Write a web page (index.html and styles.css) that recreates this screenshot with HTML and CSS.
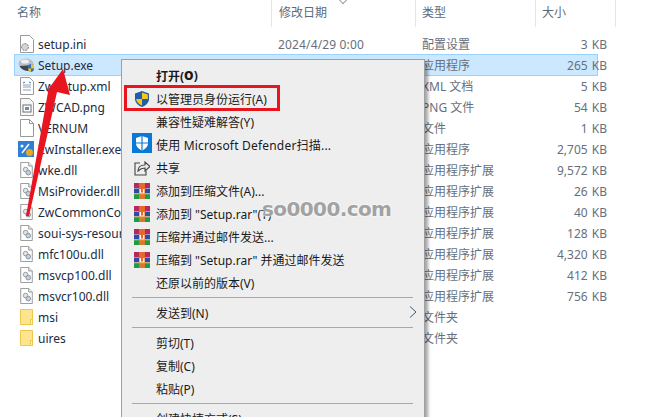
FILE: index.html
```html
<!DOCTYPE html>
<html lang="zh">
<head>
<meta charset="utf-8">
<title>Setup</title>
<link rel="stylesheet" href="styles.css">
</head>
<body>
<svg width="0" height="0" class="defs">
  <symbol id="dll" viewBox="0 0 14 18"><path d="M.5.5h9l4 4v13H.5z" fill="#fff" stroke="#8d8d8d"/><path d="M9.5.5v4h4" fill="#eee" stroke="#8d8d8d"/><circle cx="6" cy="8.5" r="2.6" fill="#dfe3e8" stroke="#8b949e"/><circle cx="9" cy="12" r="2.6" fill="#c5d0dc" stroke="#7e8a99"/></symbol>
  <symbol id="folder" viewBox="0 0 13 16"><path d="M.5.5h12v15H.5z" fill="#fde58f" stroke="#edc84f"/><path d="M10.5 15.5v-5h2v5z" fill="#fff3bf" stroke="#edc84f"/></symbol>
  <symbol id="rar" viewBox="0 0 16 16"><rect width="16" height="5" fill="#b62a5a"/><rect y="5.500" width="16" height="5" fill="#3547a8"/><rect y="11" width="16" height="5" fill="#1f9a4a"/><rect x="5" width="6" height="16" fill="#e8682a"/><rect x="5" y="12" width="6" height="4" fill="#d9792a"/><path d="M5.500 6h1.500v3.500h2V6h1.500v4.500h-5z" fill="#f8f4ea"/><rect y="10.500" width="16" height=".8" fill="#e5c44a"/></symbol>
</svg>

<main class="explorer">
  <header class="cols">
    <div class="col c-name">名称</div>
    <div class="col c-date">修改日期<span class="sort"></span></div>
    <div class="col c-type">类型</div>
    <div class="col c-size">大小</div>
  </header>
  <div class="rows">
    <div class="row"><span class="ic"><svg width="14" height="18" viewBox="0 0 14 18"><path d="M.5.5h9l4 4v13H.5z" fill="#fff" stroke="#999"/><circle cx="5" cy="12" r="3.400" fill="#d5d5d5" stroke="#777" stroke-dasharray="2 1"/></svg></span><span class="n">setup.ini</span><span class="d">2024/4/29 0:00</span><span class="t">配置设置</span><span class="s">3 KB</span></div>
    <div class="row sel"><span class="ic wide"><svg width="18" height="16" viewBox="0 0 18 16"><ellipse cx="8" cy="7" rx="7.500" ry="5.500" fill="#b9bec4"/><path d="M2 10c3 4 9 5 11 3l2-5-13 1z" fill="#3f4650"/><ellipse cx="7" cy="4.500" rx="4" ry="2" fill="#eef0f2"/><path d="M10 8l3-1 3 1v4c0 2-2 3-3 3s-3-1-3-3z" fill="#2f6fc0"/><path d="M13 7l3 1v3.500h-3zM10 11.500h3V15c-1 0-3-1-3-3.500z" fill="#f5c518"/></svg></span><span class="n">Setup.exe</span><span class="d"></span><span class="t">应用程序</span><span class="s">265 KB</span></div>
    <div class="row"><span class="ic"><svg width="14" height="18" viewBox="0 0 14 18"><path d="M.5.5h9l4 4v13H.5z" fill="#fff" stroke="#999"/><path d="M3 8h8M3 10h8M3 13h8" stroke="#8ea0b5"/><path d="M3 6l2-1M11 6l-2-1" stroke="#2d7ab8"/></svg></span><span class="n">ZwSetup.xml</span><span class="d"></span><span class="t">XML 文档</span><span class="s">5 KB</span></div>
    <div class="row"><span class="ic"><svg width="14" height="18" viewBox="0 0 14 18"><path d="M.5.5h9l4 4v13H.5z" fill="#f6f6f6" stroke="#999"/><rect x="3" y="7" width="8" height="7" fill="#fff" stroke="#66717d"/><rect x="5" y="9" width="4" height="3" fill="#7b8794"/></svg></span><span class="n">ZWCAD.png</span><span class="d"></span><span class="t">PNG 文件</span><span class="s">54 KB</span></div>
    <div class="row"><span class="ic"><svg width="14" height="18" viewBox="0 0 14 18"><path d="M.5.5h9l4 4v13H.5z" fill="#fff" stroke="#999"/><path d="M9.500.5v4h4" fill="none" stroke="#999"/></svg></span><span class="n">VERNUM</span><span class="d"></span><span class="t">文件</span><span class="s">1 KB</span></div>
    <div class="row"><span class="ic wide"><svg width="16" height="16" viewBox="0 0 16 16"><rect width="16" height="16" fill="#2f7fd6"/><path d="M4 12L11 3" stroke="#fff" stroke-width="1.500"/><circle cx="4" cy="5" r="1.500" fill="#fff"/><circle cx="11.500" cy="11.500" r="3.500" fill="#e8a820"/></svg></span><span class="n">ZwInstaller.exe</span><span class="d"></span><span class="t">应用程序</span><span class="s">2,705 KB</span></div>
    <div class="row"><span class="ic"><svg width="13" height="16"><use href="#dll"/></svg></span><span class="n">wke.dll</span><span class="d"></span><span class="t">应用程序扩展</span><span class="s">9,572 KB</span></div>
    <div class="row"><span class="ic"><svg width="13" height="16"><use href="#dll"/></svg></span><span class="n">MsiProvider.dll</span><span class="d"></span><span class="t">应用程序扩展</span><span class="s">26 KB</span></div>
    <div class="row"><span class="ic"><svg width="13" height="16"><use href="#dll"/></svg></span><span class="n">ZwCommonControl.dll</span><span class="d"></span><span class="t">应用程序扩展</span><span class="s">40 KB</span></div>
    <div class="row"><span class="ic"><svg width="13" height="16"><use href="#dll"/></svg></span><span class="n">soui-sys-resource.dll</span><span class="d"></span><span class="t">应用程序扩展</span><span class="s">128 KB</span></div>
    <div class="row"><span class="ic"><svg width="13" height="16"><use href="#dll"/></svg></span><span class="n">mfc100u.dll</span><span class="d"></span><span class="t">应用程序扩展</span><span class="s">4,320 KB</span></div>
    <div class="row"><span class="ic"><svg width="13" height="16"><use href="#dll"/></svg></span><span class="n">msvcp100.dll</span><span class="d"></span><span class="t">应用程序扩展</span><span class="s">412 KB</span></div>
    <div class="row"><span class="ic"><svg width="13" height="16"><use href="#dll"/></svg></span><span class="n">msvcr100.dll</span><span class="d"></span><span class="t">应用程序扩展</span><span class="s">756 KB</span></div>
    <div class="row"><span class="ic"><svg width="13" height="16"><use href="#folder"/></svg></span><span class="n">msi</span><span class="d"></span><span class="t">文件夹</span><span class="s"></span></div>
    <div class="row"><span class="ic"><svg width="13" height="16"><use href="#folder"/></svg></span><span class="n">uires</span><span class="d"></span><span class="t">文件夹</span><span class="s"></span></div>
  </div>
</main>

<nav class="menu">
  <div class="mi bold">打开(<b>O</b>)</div>
  <div class="mi boxed"><span class="mic"><svg width="14" height="16" viewBox="0 0 14 16"><path d="M7 0l7 2.500V8c0 4-4 7-7 8-3-1-7-4-7-8V2.500z" fill="#1f5fa8"/><path d="M7 1.500L12.800 3.500V8H7zM7 8v6.500C4.500 13.500 1.300 11 1.200 8z" fill="#f8c51c"/></svg></span>以管理员身份运行(A)</div>
  <div class="mi">兼容性疑难解答(Y)</div>
  <div class="mi roomy"><span class="mic big"><svg width="20" height="20" viewBox="0 0 20 20"><rect width="20" height="20" fill="#0a78d4"/><path d="M10 3l6 2v5c0 4-3 6-6 7.500C7 16 4 14 4 10V5z" fill="#fff"/><path d="M10 3v14.500M4 10h12" stroke="#0a78d4" stroke-width="1.200"/></svg></span>使用 Microsoft Defender扫描...</div>
  <div class="mi"><span class="mic"><svg width="16" height="16" viewBox="0 0 16 16" fill="none" stroke="#444" stroke-width="1.100"><path d="M6 3H1v12h11v-4"/><path d="M4 11c0-4 3-6 7-6V2l5 4.500L11 11V8c-3 0-5 1-7 3z" fill="#eee"/></svg></span>共享</div>
  <div class="mi"><span class="mic"><svg width="16" height="16"><use href="#rar"/></svg></span>添加到压缩文件(A)...</div>
  <div class="mi"><span class="mic"><svg width="16" height="16"><use href="#rar"/></svg></span>添加到 "Setup.rar"(T)</div>
  <div class="mi"><span class="mic"><svg width="16" height="16"><use href="#rar"/></svg></span>压缩并通过邮件发送...</div>
  <div class="mi"><span class="mic"><svg width="16" height="16"><use href="#rar"/></svg></span>压缩到 "Setup.rar" 并通过邮件发送</div>
  <div class="mi">还原以前的版本(V)</div>
  <hr>
  <div class="mi">发送到(N)<svg class="chev" width="8" height="12" viewBox="0 0 8 12" fill="none" stroke="#3c5a78"><path d="M1 .5L7 6 1 11.500"/></svg></div>
  <hr>
  <div class="mi">剪切(T)</div>
  <div class="mi">复制(C)</div>
  <div class="mi">粘贴(P)</div>
  <hr>
  <div class="mi">创建快捷方式(S)</div>
</nav>

<div class="mark">so0000.com</div>
<svg class="arrow" width="52" height="155" viewBox="0 0 52 155"><path d="M43 4L50 30 37 27 9 151 6 151 28 27 27 26z" fill="#e8141e"/></svg>
</body>
</html>
```

FILE: styles.css
```css
* { box-sizing: border-box; }
html, body { margin: 0; height: 100%; }
body {
  width: 653px; height: 417px; overflow: hidden; position: relative;
  background: #fff;
  font-family: "Noto Sans", "Noto Sans CJK SC", sans-serif;
  font-size: 12px; color: #1c2b3f;
}
.defs { position: absolute; }
.cols { display: flex; height: 27px; padding-left: 17px; color: #5a6b7d; }
.col { border-right: 1px solid #e5e5e5; padding-top: 4px; position: relative; line-height: 18px; }
.c-name { width: 255px; }
.c-date { width: 144px; padding-left: 7px; }
.c-type { width: 120px; padding-left: 6px; }
.c-size { width: 80px; padding-left: 6px; }
.sort {
  position: absolute; left: 68px; top: -3px; width: 6px; height: 6px;
  border: solid #a0a0a0; border-width: 0 1px 1px 0; transform: rotate(45deg);
}
.rows { padding: 7px 0 0 14px; width: 598px; }
.row { display: flex; align-items: center; height: 21px; padding-bottom: 1px; border: 1px solid transparent; white-space: nowrap; }
.row.sel { background: #cce8ff; border-color: #99d1ff; height: 22px; margin-top: -1px; padding-bottom: 0; }
.ic { width: 23px; flex: none; padding-left: 5px; display: flex; align-items: center; }
.ic.wide { padding-left: 3px; }
.n { width: 240px; flex: none; overflow: hidden; }
.d { width: 144px; flex: none; color: #66707c; letter-spacing: .15px; }
.t { width: 110px; flex: none; color: #66707c; }
.s { width: 75px; flex: none; text-align: right; color: #66707c; word-spacing: 1px; }

.menu {
  position: absolute; left: 121px; top: 59px; width: 304px; height: 370px;
  background: #eee; border: 1px solid #a0a0a0; padding: 4px 2px 0 2px;
  box-shadow: 3px 3px 3px rgba(0,0,0,.35);
  color: #1a1a1a;
}
.mi { display: flex; align-items: center; height: 23px; padding-left: 32px; position: relative; white-space: nowrap; }
.roomy { letter-spacing: .2px; }
.bold { font-weight: 700; }
.mic { position: absolute; left: 8px; top: 3px; width: 20px; height: 18px; display: flex; align-items: center; justify-content: center; }
.mic.big { top: 1px; }
.boxed::after {
  content: ""; box-sizing: border-box; position: absolute; left: 0; top: -2px; width: 156px; height: 26px;
  border: 3px solid #e8141e;
}
.menu hr { margin: 3px 9px 3px 8px; border: 0; border-top: 1px solid #a8a8a8; height: 0; }
.chev { position: absolute; right: 5px; top: 5px; }
.mark {
  position: absolute; left: 262px; top: 197px;
  font: 700 20px "DejaVu Sans", sans-serif; letter-spacing: -.6px;
  color: #a2a2a2; text-shadow: 0 0 2px #fff, 0 0 2px #fff;
}
.arrow { position: absolute; left: 20px; top: 65px; }
```
